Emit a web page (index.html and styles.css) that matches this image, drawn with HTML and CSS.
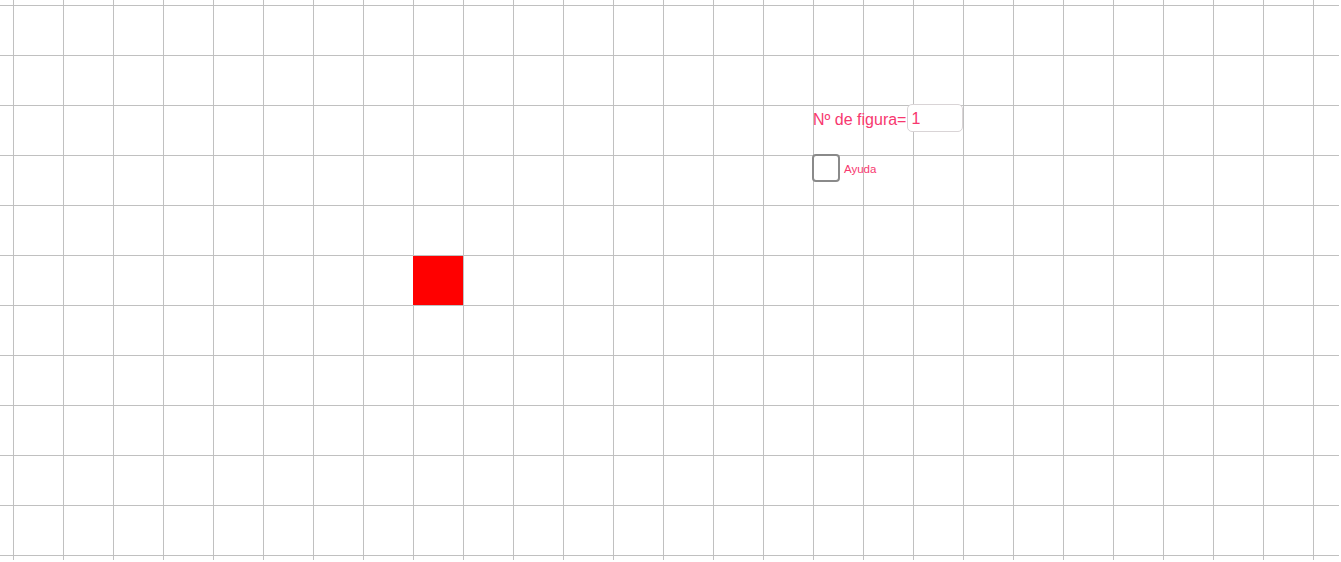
FILE: index.html
```html
<!DOCTYPE html>
<html lang="es">
<head>
<meta charset="utf-8">
<title>Nº de figura</title>
<link rel="stylesheet" href="styles.css">
</head>
<body>
<div class="canvas">
  <div class="square"></div>
  <div class="field">
    <span class="field-label">Nº de figura=</span>
    <span class="field-input">1</span>
  </div>
  <div class="check">
    <span class="check-box"></span>
    <span class="check-label">Ayuda</span>
  </div>
</div>
</body>
</html>
```

FILE: styles.css
```css
html, body {
  margin: 0;
  padding: 0;
  background: #ffffff;
  font-family: "Liberation Sans", Arial, sans-serif;
}

.canvas {
  position: relative;
  width: 1339px;
  height: 560px;
  background-color: #ffffff;
  background-image:
    linear-gradient(to right, #c0c0c0 0, #c0c0c0 1px, transparent 1px),
    linear-gradient(to bottom, #c0c0c0 0, #c0c0c0 1px, transparent 1px);
  background-size: 50px 50px, 50px 50px;
  background-position: 13px 0, 0 5px;
  overflow: hidden;
}

.square {
  position: absolute;
  left: 413px;
  top: 256px;
  width: 50px;
  height: 49px;
  background: #ff0000;
}

.field {
  position: absolute;
  left: 813px;
  top: 104px;
  height: 28px;
  display: flex;
  align-items: center;
  color: #f7386f;
}

.field-label {
  font-size: 16px;
  line-height: 18px;
  padding-top: 4px;
}

.field-input {
  box-sizing: border-box;
  width: 56px;
  height: 28px;
  margin-left: 1px;
  border: 1px solid #d9d4d6;
  border-radius: 5px;
  background: #ffffff;
  font-size: 16px;
  line-height: 18px;
  padding: 5px 0 0 3px;
}

.check {
  position: absolute;
  left: 812px;
  top: 154px;
  display: flex;
  align-items: center;
  gap: 4px;
}

.check-box {
  box-sizing: border-box;
  width: 28px;
  height: 28px;
  border: 2px solid #8a8a8a;
  border-radius: 4px;
  background: #ffffff;
}

.check-label {
  color: #f7386f;
  font-size: 11.5px;
  line-height: 14px;
  padding-top: 1px;
}
```
